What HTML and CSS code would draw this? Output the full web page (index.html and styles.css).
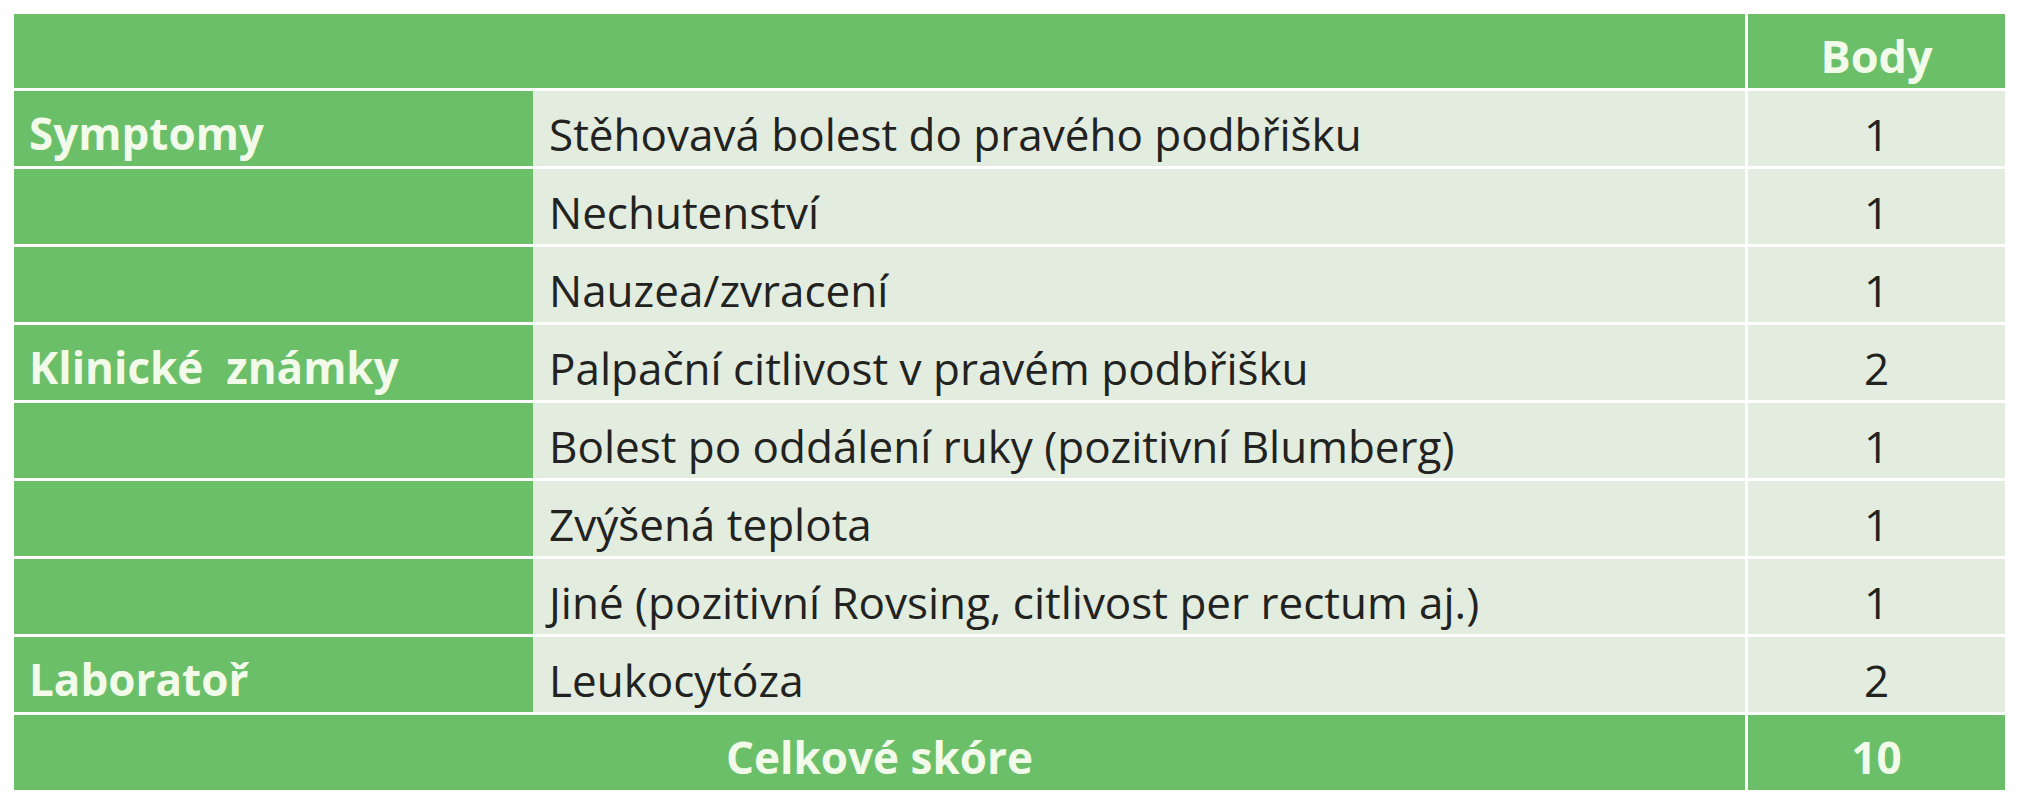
FILE: index.html
```html
<!DOCTYPE html>
<html lang="cs">
<head>
<meta charset="utf-8">
<title>Skóre</title>
<link rel="stylesheet" href="styles.css">
</head>
<body>
<table class="score">
  <colgroup>
    <col class="c-cat">
    <col class="c-desc">
    <col class="c-pts">
  </colgroup>
  <thead>
    <tr>
      <th colspan="2" class="head"></th>
      <th class="head pts">Body</th>
    </tr>
  </thead>
  <tbody>
    <tr><th class="cat">Symptomy</th><td class="desc">Stěhovavá bolest do pravého podbřišku</td><td class="pts">1</td></tr>
    <tr><th class="cat"></th><td class="desc">Nechutenství</td><td class="pts">1</td></tr>
    <tr><th class="cat"></th><td class="desc">Nauzea/zvracení</td><td class="pts">1</td></tr>
    <tr><th class="cat">Klinické&nbsp; známky</th><td class="desc">Palpační citlivost v pravém podbřišku</td><td class="pts">2</td></tr>
    <tr><th class="cat"></th><td class="desc">Bolest po oddálení ruky (pozitivní Blumberg)</td><td class="pts">1</td></tr>
    <tr><th class="cat"></th><td class="desc">Zvýšená teplota</td><td class="pts">1</td></tr>
    <tr><th class="cat"></th><td class="desc">Jiné (pozitivní Rovsing, citlivost per rectum aj.)</td><td class="pts">1</td></tr>
    <tr><th class="cat">Laboratoř</th><td class="desc">Leukocytóza</td><td class="pts">2</td></tr>
  </tbody>
  <tfoot>
    <tr>
      <th colspan="2" class="total">Celkové skóre</th>
      <th class="total pts">10</th>
    </tr>
  </tfoot>
</table>
</body>
</html>
```

FILE: styles.css
```css
html, body {
  margin: 0;
  padding: 0;
  background: #ffffff;
}

body {
  padding: 14px 0 0 14px;
  font-family: "Open Sans", "Noto Sans", sans-serif;
}

.score {
  border-collapse: separate;
  border-spacing: 0;
  table-layout: fixed;
  width: 1991px;
}

.c-cat { width: 519px; }
.c-desc { width: 1212px; }
.c-pts { width: 260px; }

.score th,
.score td {
  box-sizing: border-box;
  padding: 0;
  vertical-align: top;
  white-space: nowrap;
}

/* header */
.head {
  background: #6bbf68;
  color: #f2fbea;
  font-weight: 700;
  font-size: 45px;
  line-height: 43px;
  height: 77px;
  padding-top: 20px !important;
  border-bottom: 3px solid #ffffff;
  text-align: center;
}

/* body rows */
.score tbody th,
.score tbody td {
  height: 78px;
  border-bottom: 3px solid #ffffff;
  line-height: 43px;
}

.cat {
  background: #6bbf68;
  color: #f2fbea;
  font-weight: 700;
  font-size: 44px;
  text-align: left;
  padding: 21px 0 0 15px !important;
}

.desc {
  background: #e2ecdf;
  color: #222220;
  font-size: 44px;
  padding: 22px 0 0 16px !important;
}

.score tbody .pts {
  background: #e2ecdf;
  color: #222220;
  font-size: 44px;
  text-align: center;
  padding-top: 22px;
}

.pts {
  border-left: 3px solid #ffffff;
}

/* total row */
.total {
  background: #6bbf68;
  color: #f2fbea;
  font-weight: 700;
  font-size: 44px;
  line-height: 43px;
  height: 75px;
  padding-top: 21px !important;
  text-align: center;
}
```
